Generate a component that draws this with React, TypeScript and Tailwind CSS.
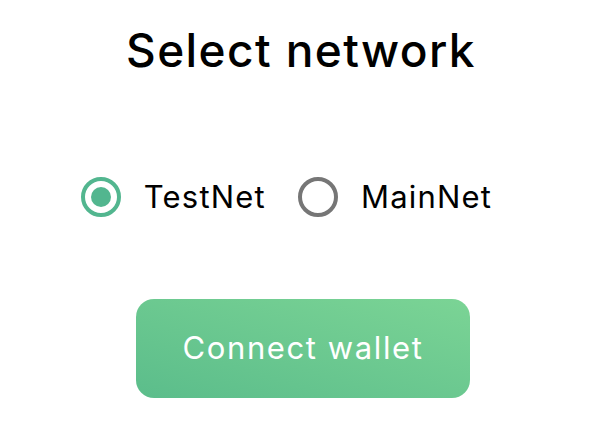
import React, { useState } from 'react'

const font = { fontFamily: 'Inter, "Open Sans", sans-serif' }

function Radio({ label, checked, onClick }: { label: string; checked: boolean; onClick: () => void }) {
  return (
    <button type="button" onClick={onClick} className="flex items-center gap-[23px]">
      <span
        className={`w-10 h-10 rounded-full flex items-center justify-center border-[4px] ${checked ? 'border-[#52b68f]' : 'border-[#767676]'}`}
      >
        {checked && <span className="w-5 h-5 rounded-full bg-[#52b68f]"></span>}
      </span>
      <span className="text-[31px] leading-[40px] text-black tracking-[1.2px]">{label}</span>
    </button>
  )
}

export default function App() {
  const [net, setNet] = useState('testnet')

  return (
    <div className="w-[602px] h-[446px] bg-white flex flex-col items-center" style={font}>
      {/* Title */}
      <h1 className="mt-[22px] text-[46px] font-medium text-black leading-[56px] tracking-[1.4px]">Select network</h1>

      {/* Options */}
      <div className="mt-[99px] flex items-center gap-[32px] pr-[29px]">
        <Radio label="TestNet" checked={net === 'testnet'} onClick={() => setNet('testnet')} />
        <Radio label="MainNet" checked={net === 'mainnet'} onClick={() => setNet('mainnet')} />
      </div>

      <button
        type="button"
        className="mt-[82px] ml-[4px] w-[334px] h-[99px] rounded-[18px] bg-gradient-to-tr from-[#5bbd8b] to-[#7bd495] text-white text-[31px] tracking-[1.6px]"
      >
        Connect wallet
      </button>
    </div>
  )
}
